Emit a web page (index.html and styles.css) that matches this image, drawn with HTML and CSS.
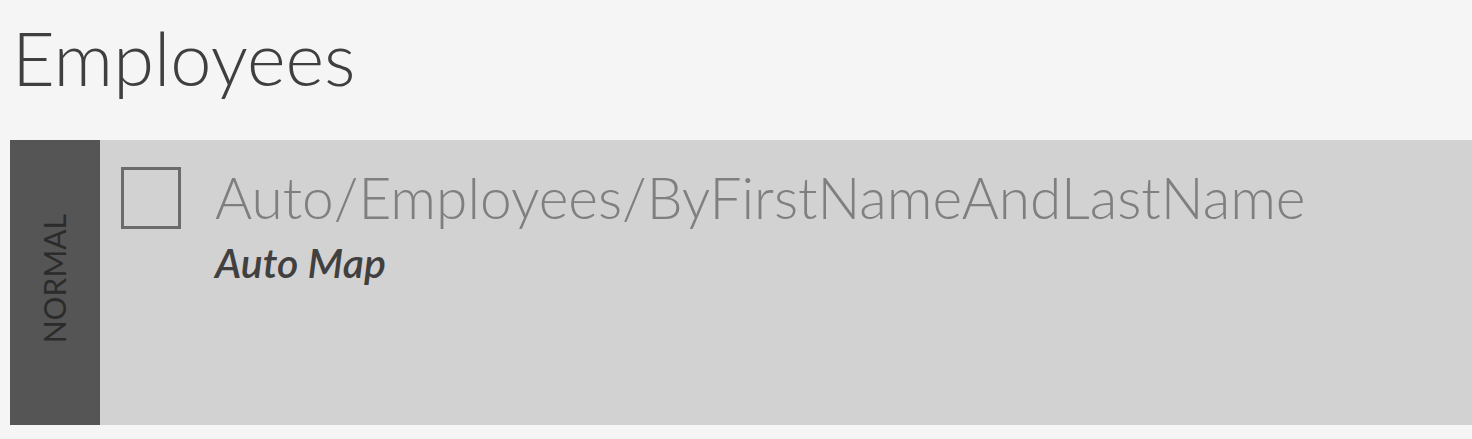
FILE: index.html
```html
<!DOCTYPE html>
<html>
<head>
<meta charset="utf-8">
<link rel="stylesheet" href="styles.css">
</head>
<body>
<h1 class="page-title">Employees</h1>
<div class="panel">
  <div class="side"><span class="side-label">NORMAL</span></div>
  <div class="content">
    <div class="check"></div>
    <div class="info">
      <div class="index-name">Auto/Employees/ByFirstNameAndLastName</div>
      <div class="index-type">Auto Map</div>
    </div>
  </div>
</div>
</body>
</html>
```
FILE: styles.css
```css
html, body {
  margin: 0;
  padding: 0;
  background: #f5f5f5;
  font-family: Lato, "Open Sans", sans-serif;
}
.page-title {
  margin: 0;
  padding: 13px 0 0 12px;
  height: 140px;
  box-sizing: border-box;
  font-weight: 300;
  font-size: 74px;
  line-height: 90px;
  color: #3f3f3f;
}
.panel {
  display: flex;
  margin-left: 10px;
  height: 285px;
  background: #d2d2d2;
}
.side {
  width: 90px;
  background: #555555;
  display: flex;
  align-items: center;
  justify-content: center;
}
.side-label {
  writing-mode: vertical-rl;
  transform: rotate(180deg);
  font-size: 30px;
  color: #2b2b2b;
  line-height: 30px;
  margin-bottom: 8px;
  margin-left: -2px;
}
.content {
  display: flex;
  padding: 27px 0 0 21px;
}
.check {
  width: 60px;
  height: 62px;
  box-sizing: border-box;
  border: 3px solid #6b6b6b;
}
.info {
  margin-left: 34px;
}
.index-name {
  font-weight: 300;
  font-size: 56.8px;
  line-height: 60px;
  color: #7f7f7f;
}
.index-type {
  font-style: italic;
  font-weight: 600;
  font-size: 41px;
  line-height: 44px;
  color: #404040;
  margin-top: 14px;
}
```
